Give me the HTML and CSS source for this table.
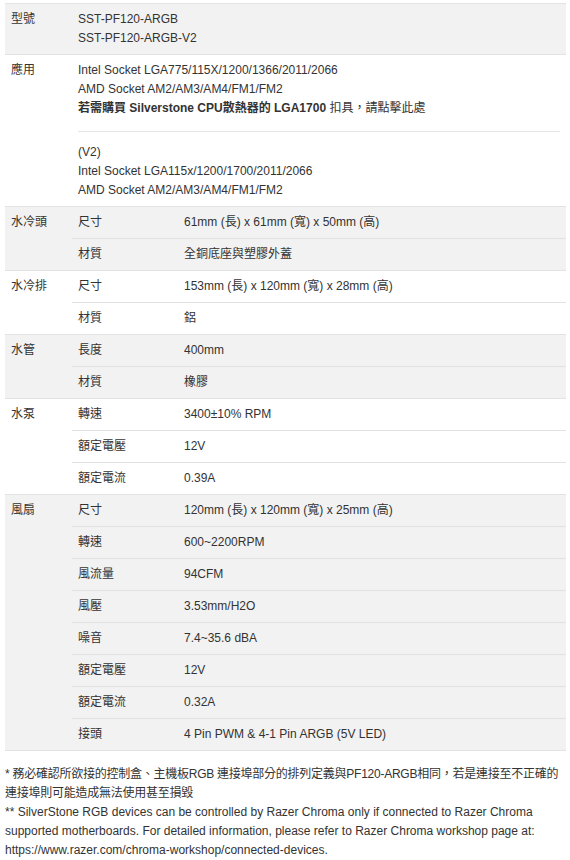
FILE: index.html
```html
<!DOCTYPE html>
<html lang="zh-Hant">
<head>
<meta charset="utf-8">
<link rel="stylesheet" href="styles.css">
</head>
<body>
<div class="page">
<table class="spec">
  <colgroup><col class="c1"><col class="c2"><col class="c3"></colgroup>
  <tbody class="grey">
    <tr><th>型號</th><td colspan="2">SST-PF120-ARGB<br>SST-PF120-ARGB-V2</td></tr>
  </tbody>
  <tbody class="white">
    <tr><th>應用</th><td colspan="2">Intel Socket LGA775/115X/1200/1366/2011/2066<br>AMD Socket AM2/AM3/AM4/FM1/FM2<br><b>若需購買 Silverstone CPU散熱器的 LGA1700</b> 扣具，請點擊此處<hr class="sep">(V2)<br>Intel Socket LGA115x/1200/1700/2011/2066<br>AMD Socket AM2/AM3/AM4/FM1/FM2</td></tr>
  </tbody>
  <tbody class="grey">
    <tr><th rowspan="2">水冷頭</th><td>尺寸</td><td>61mm (長) x 61mm (寬) x 50mm (高)</td></tr>
    <tr class="sub"><td>材質</td><td>全銅底座與塑膠外蓋</td></tr>
  </tbody>
  <tbody class="white">
    <tr><th rowspan="2">水冷排</th><td>尺寸</td><td>153mm (長) x 120mm (寬) x 28mm (高)</td></tr>
    <tr class="sub"><td>材質</td><td>鋁</td></tr>
  </tbody>
  <tbody class="grey">
    <tr><th rowspan="2">水管</th><td>長度</td><td>400mm</td></tr>
    <tr class="sub"><td>材質</td><td>橡膠</td></tr>
  </tbody>
  <tbody class="white">
    <tr><th rowspan="3">水泵</th><td>轉速</td><td>3400±10% RPM</td></tr>
    <tr class="sub"><td>額定電壓</td><td>12V</td></tr>
    <tr class="sub"><td>額定電流</td><td>0.39A</td></tr>
  </tbody>
  <tbody class="grey">
    <tr><th rowspan="8">風扇</th><td>尺寸</td><td>120mm (長) x 120mm (寬) x 25mm (高)</td></tr>
    <tr class="sub"><td>轉速</td><td>600~2200RPM</td></tr>
    <tr class="sub"><td>風流量</td><td>94CFM</td></tr>
    <tr class="sub"><td>風壓</td><td>3.53mm/H2O</td></tr>
    <tr class="sub"><td>噪音</td><td>7.4~35.6 dBA</td></tr>
    <tr class="sub"><td>額定電壓</td><td>12V</td></tr>
    <tr class="sub"><td>額定電流</td><td>0.32A</td></tr>
    <tr class="sub"><td>接頭</td><td>4 Pin PWM &amp; 4-1 Pin ARGB (5V LED)</td></tr>
  </tbody>
</table>
<p class="notes"><span class="cjk">* 務必確認所欲接的控制盒、主機板RGB 連接埠部分的排列定義與PF120-ARGB相同，若是連接至不正確的<br>連接埠則可能造成無法使用甚至損毀</span><br>** SilverStone RGB devices can be controlled by Razer Chroma only if connected to Razer Chroma<br>supported motherboards. For detailed information, please refer to Razer Chroma workshop page at:<br>https://www.razer.com/chroma-workshop/connected-devices.</p>
</div>
</body>
</html>
```
FILE: styles.css
```css
html, body {
  margin: 0;
  padding: 0;
  background: #ffffff;
}
body {
  font-family: "Liberation Sans", "Noto Sans CJK TC", sans-serif;
  font-size: 12px;
  line-height: 19px;
  color: #333333;
}
.page {
  padding: 3px 4px 0 5px;
}
.spec {
  width: 561px;
  border-collapse: collapse;
  table-layout: fixed;
  border-top: 1px solid #e4e4e4;
}
.c1 { width: 67px; }
.c2 { width: 106px; }
.c3 { width: auto; }
.spec th,
.spec td {
  padding: 6px 6px;
  text-align: left;
  vertical-align: top;
  font-weight: normal;
}
.spec tbody {
  border-bottom: 1px solid #e2e2e2;
}
.spec tbody.grey { background: #f2f2f2; }
.spec tbody.white { background: #ffffff; }
.spec tr.sub td {
  border-top: 1px solid #e2e2e2;
}
.spec b { font-weight: bold; }
.sep {
  border: 0;
  border-top: 1px solid #e6e6e6;
  margin: 13px 0 11px;
  height: 0;
}
.notes {
  margin: 14px 0 0;
  line-height: 19px;
  white-space: nowrap;
}
.cjk {
  letter-spacing: -0.25px;
}
```
